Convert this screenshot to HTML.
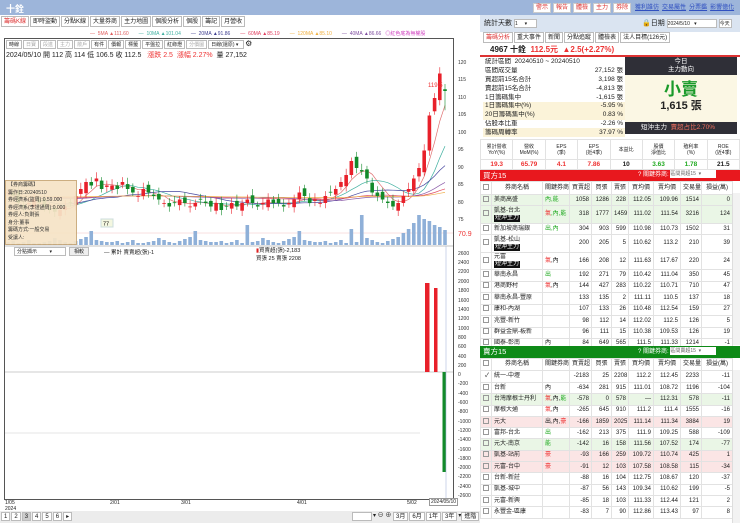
<!DOCTYPE html>
<html><head><meta charset="utf-8">
<style>
*{box-sizing:border-box;margin:0;padding:0}
body{width:740px;height:523px;overflow:hidden;background:#fff;font-family:"Liberation Sans","Noto Sans CJK TC",sans-serif;font-size:7px;color:#222;position:relative}
.abs{position:absolute}
.topbar{background:#9db5da;height:15px}
.tab{display:inline-block;border:1px solid #bbb;background:#fff;padding:0 2px;height:11px;line-height:10px;font-size:6px;margin-right:1px;vertical-align:top}
.btn{display:inline-block;background:#fff;color:#d33;border:1px solid #ccc;padding:0 2px;font-size:6px;height:10px;line-height:9px;margin-right:2px}
.lnk{color:#3050c0;text-decoration:underline;margin-right:3px;font-size:6px}
table{border-collapse:collapse;width:100%}
td{border:1px solid #e2e2e2;font-size:6px;line-height:7px;text-align:right;padding:0 2px;white-space:nowrap;overflow:hidden}
td.l{text-align:left}td.c{text-align:center}
.tag{background:#111;color:#fff;padding:0 1px;font-size:6px;display:inline-block;line-height:7px}
.cb{display:inline-block;width:6px;height:6px;border:1px solid #999}
.g{background:#eaf6e6}.p{background:#fbe5e5}
.rd{color:#e33}.gr{color:#2a2}
.st td{border:none;font-size:6.5px;line-height:8px;height:8.8px}
.mt td{font-size:5px;line-height:6px}
</style></head><body>
<!-- LEFT -->
<div class="abs topbar" style="left:0;top:0;width:480px"><span style="color:#fff;font-weight:bold;font-size:9px;position:absolute;left:6px;top:2px">十銓</span></div>
<div class="abs" style="left:1px;top:16px;white-space:nowrap">
<span class="tab" style="color:#d33">籌碼K線</span><span class="tab">即時盜動</span><span class="tab">分點K線</span><span class="tab">大量券商</span><span class="tab">主力地圖</span><span class="tab">個股分析</span><span class="tab">個股</span><span class="tab">籌記</span><span class="tab">月營收</span></div>
<div class="abs" style="left:90px;top:30px;font-size:5px;white-space:nowrap">
<span style="color:#e06060;margin-right:10px">— &nbsp;5MA ▲111.60</span><span style="color:#40b0a0;margin-right:10px">— &nbsp;10MA ▲101.04</span><span style="color:#404090;margin-right:10px">— &nbsp;20MA ▲91.86</span><span style="color:#e04060;margin-right:10px">— &nbsp;60MA ▲85.19</span><span style="color:#f0b040;margin-right:10px">— &nbsp;120MA ▲85.10</span><span style="color:#8050a0;margin-right:4px">— &nbsp;40MA ▲86.66</span><span style="color:#d040c0">◎紅色底為無權股</span></div>
<div class="abs" style="left:4px;top:38px;width:450px;height:462px;border:1px solid #555"></div>
<div class="abs" style="left:6px;top:40px;white-space:nowrap">
<span class="tab" style="height:9px;line-height:8px;font-size:5px">時線</span><span class="tab" style="height:9px;line-height:8px;font-size:5px;color:#aaa">日寶</span><span class="tab" style="height:9px;line-height:8px;font-size:5px;color:#aaa">段進</span><span class="tab" style="height:9px;line-height:8px;font-size:5px;color:#aaa">主力</span><span class="tab" style="height:9px;line-height:8px;font-size:5px;color:#aaa">散戶</span><span class="tab" style="height:9px;line-height:8px;font-size:5px">有件</span><span class="tab" style="height:9px;line-height:8px;font-size:5px">價報</span><span class="tab" style="height:9px;line-height:8px;font-size:5px">標籤</span><span class="tab" style="height:9px;line-height:8px;font-size:5px">平盤拉</span><span class="tab" style="height:9px;line-height:8px;font-size:5px">紅綠燈</span><span class="tab" style="height:9px;line-height:8px;font-size:5px;color:#aaa">分價圖</span><span class="tab" style="height:9px;line-height:8px;font-size:5px;width:36px">日線(還原) ▾</span><span style="font-size:8px;line-height:8px">⚙</span></div>
<div class="abs" style="left:6px;top:50px;font-size:7px;white-space:nowrap">2024/05/10 開 112 高 114 低 106.5 收 112.5 &nbsp; <span class="rd">漲跌 2.5 &nbsp;漲幅 2.27%</span> &nbsp;量 27,152</div>
<svg class="abs" style="left:0;top:0" width="480" height="523" id="ch"></svg>
<div class="abs" style="left:458px;top:0;font-size:5px;color:#333;width:22px;height:500px">
<div class="abs" style="top:60px">120</div><div class="abs" style="top:77px">115</div><div class="abs" style="top:95px">110</div><div class="abs" style="top:112px">105</div><div class="abs" style="top:130px">100</div><div class="abs" style="top:147px">95</div><div class="abs" style="top:165px">90</div><div class="abs" style="top:182px">85</div><div class="abs" style="top:200px">80</div><div class="abs" style="top:217px">75</div><div class="abs rd" style="top:231px;font-size:7px">70.9</div>
<div class="abs" style="top:251px">2600</div><div class="abs" style="top:260px">2400</div><div class="abs" style="top:269px">2200</div><div class="abs" style="top:279px">2000</div><div class="abs" style="top:288px">1800</div><div class="abs" style="top:298px">1600</div><div class="abs" style="top:307px">1400</div><div class="abs" style="top:316px">1200</div><div class="abs" style="top:326px">1000</div><div class="abs" style="top:335px">800</div><div class="abs" style="top:344px">600</div><div class="abs" style="top:354px">400</div><div class="abs" style="top:363px">200</div><div class="abs" style="top:372px">0</div><div class="abs" style="top:381px">-200</div><div class="abs" style="top:391px">-400</div><div class="abs" style="top:400px">-600</div><div class="abs" style="top:409px">-800</div><div class="abs" style="top:419px">-1000</div><div class="abs" style="top:428px">-1200</div><div class="abs" style="top:437px">-1400</div><div class="abs" style="top:447px">-1600</div><div class="abs" style="top:456px">-1800</div><div class="abs" style="top:465px">-2000</div><div class="abs" style="top:474px">-2200</div><div class="abs" style="top:484px">-2400</div><div class="abs" style="top:493px">-2600</div></div>
<div class="abs" style="left:5px;top:180px;width:72px;height:65px;background:#f6e4c6;border:1px solid #c9a878;font-size:5px;line-height:7.5px;padding:1px 2px;opacity:.93;overflow:hidden;white-space:nowrap">【券商籌碼】<br>籌作日:20240510<br>券經濟系(盜周):0.59.000<br>券經濟系(李證通周):0.000<br>券經人:負剩張<br>身分:董事<br>籌碼方式:一般交易<br>受讓人:</div>
<div class="abs" style="left:14px;top:247px;width:52px;height:9px;border:1px solid #bbb;font-size:5px;line-height:8px;padding-left:2px">分點擷示 &nbsp; &nbsp; &nbsp; &nbsp; ▾</div>
<div class="abs" style="left:69px;top:247px;width:20px;height:9px;border:1px solid #bbb;background:#eee;font-size:5px;line-height:8px;text-align:center">相較</div>
<div class="abs" style="left:104px;top:248px;font-size:5.5px">— 累計 賣賣超(張)-1</div>
<div class="abs" style="left:256px;top:247px;font-size:5.5px;line-height:8px"><span style="color:#d22">▮</span>買賣超(張)-2,183<br>買張 25 賣張 2208</div>
<div class="abs" style="left:5px;top:500px;font-size:5px;line-height:6px">1/05<br>2024</div>
<div class="abs" style="left:110px;top:500px;font-size:5px">2/01</div>
<div class="abs" style="left:181px;top:500px;font-size:5px">3/01</div>
<div class="abs" style="left:297px;top:500px;font-size:5px">4/01</div>
<div class="abs" style="left:407px;top:500px;font-size:5px">5/02</div>
<div class="abs" style="left:429px;top:498px;font-size:5px;border:1px solid #999;padding:0 1px;background:#fff">2024/05/10</div>
<div class="abs" style="left:0;top:511px;width:480px;height:12px;background:#ececec"></div>
<div class="abs" style="left:1px;top:512px;white-space:nowrap"><span class="tab" style="height:9px;line-height:8px">1</span><span class="tab" style="height:9px;line-height:8px">2</span><span class="tab" style="height:9px;line-height:8px;background:#ccc">3</span><span class="tab" style="height:9px;line-height:8px">4</span><span class="tab" style="height:9px;line-height:8px">5</span><span class="tab" style="height:9px;line-height:8px">6</span><span class="tab" style="height:9px;line-height:8px">▸</span></div>
<div class="abs" style="left:352px;top:512px;font-size:6px;white-space:nowrap;line-height:9px"><span class="tab" style="height:9px;width:20px"></span>▾ ⊖ ⊕ <span class="tab" style="height:9px;line-height:8px">3月</span><span class="tab" style="height:9px;line-height:8px">6月</span><span class="tab" style="height:9px;line-height:8px">1年</span><span class="tab" style="height:9px;line-height:8px">3年</span>▾<span class="tab" style="height:9px;line-height:8px">進階</span></div>

<!-- RIGHT -->
<div class="abs topbar" style="left:480px;top:0;width:260px;white-space:nowrap;padding:2px 0 0 53px"><span class="btn">警示</span><span class="btn">報告</span><span class="btn">體檢</span><span class="btn">主力</span><span class="btn">券除</span> <span class="lnk">獲利誰仿</span><span class="lnk">交易屬性</span><span class="lnk">分票鑑</span><span class="lnk">影響億化</span></div>
<div class="abs" style="left:480px;top:15px;width:260px;height:17px;background:#dae4f1;font-size:7px;padding:4px 4px;white-space:nowrap;line-height:9px">統計天數 <span style="display:inline-block;width:23px;height:9px;background:#fff;border:1px solid #bbb;font-size:5px;vertical-align:top;line-height:8px">1 &nbsp; &nbsp; ▾</span><span style="position:absolute;left:162px;top:4px">🔒日期 <span style="display:inline-block;width:50px;height:9px;background:#fff;border:1px solid #bbb;font-size:5px;vertical-align:top;line-height:8px">2024/5/10 &nbsp; ▾</span> <span style="display:inline-block;width:13px;height:9px;background:#fff;border:1px solid #bbb;font-size:5px;vertical-align:top;line-height:8px">今天</span></span></div>
<div class="abs" style="left:483px;top:32px;white-space:nowrap"><span class="tab" style="color:#d33">籌碼分析</span><span class="tab">重大事件</span><span class="tab">新聞</span><span class="tab">分點追蹤</span><span class="tab">體檢表</span><span class="tab">法人目標(126元)</span></div>
<div class="abs" style="left:480px;top:44px;width:260px;height:13px;border-bottom:2px solid #d33;font-size:8px;font-weight:bold;padding:1px 10px;white-space:nowrap;line-height:10px">4967 十銓 &nbsp;<span class="rd">112.5元 &nbsp;▲2.5(+2.27%)</span></div>
<div class="abs" style="left:483px;top:58px;width:142px"><table class="st">
<tr><td class="l">統計區間 &nbsp;20240510 ~ 20240510</td><td></td></tr>
<tr><td class="l">區間成交量</td><td>27,152 張</td></tr>
<tr><td class="l">買超前15名合計</td><td>3,198 張</td></tr>
<tr><td class="l">賣超前15名合計</td><td>-4,813 張</td></tr>
<tr><td class="l">1日籌碼集中</td><td>-1,615 張</td></tr>
<tr style="background:#fbf3d9"><td class="l">1日籌碼集中(%)</td><td>-5.95 %</td></tr>
<tr style="background:#fbf3d9"><td class="l">20日籌碼集中(%)</td><td>0.83 %</td></tr>
<tr><td class="l">佔股本比重</td><td>-2.26 %</td></tr>
<tr style="background:#fbf3d9"><td class="l">籌碼周轉率</td><td>37.97 %</td></tr></table></div>
<div class="abs" style="left:625px;top:57px;width:112px;height:18px;background:#2f2f37;color:#fff;text-align:center;font-size:6.5px;line-height:8px;padding-top:1px">今日<br>主力動向</div>
<div class="abs" style="left:625px;top:75px;width:112px;height:47px;background:#fbf7e4;text-align:center"><div style="color:#1a9a2a;font-size:17px;line-height:20px;font-weight:bold;margin-top:5px">小賣</div><div style="font-size:11px;line-height:13px;font-weight:bold">1,615 張</div></div>
<div class="abs" style="left:625px;top:122px;width:112px;height:12px;background:#2f2f37;color:#fff;font-size:6.5px;line-height:8px;padding:2px 0 0 16px;white-space:nowrap">短沖主力 &nbsp;<span style="color:#f07060">賣超占比2.70%</span></div>
<div class="abs" style="left:480px;top:139px;width:260px"><table class="mt" style="table-layout:fixed"><tr style="height:20px"><td class="c">累計營收<br>YoY(%)</td><td class="c">營收<br>MoM(%)</td><td class="c">EPS<br>(季)</td><td class="c">EPS<br>(近4季)</td><td class="c">本益比</td><td class="c">股價<br>淨值比</td><td class="c">殖利率<br>(%)</td><td class="c">ROE<br>(近4季)</td></tr>
<tr style="height:10px;font-weight:bold"><td class="c rd" style="font-size:6.5px">19.3</td><td class="c rd" style="font-size:6.5px">65.79</td><td class="c rd" style="font-size:6.5px">4.1</td><td class="c rd" style="font-size:6.5px">7.86</td><td class="c" style="font-size:6.5px">10</td><td class="c gr" style="font-size:6.5px">3.63</td><td class="c gr" style="font-size:6.5px">1.78</td><td class="c" style="font-size:6.5px">21.5</td></tr></table></div>
<div class="abs" style="left:480px;top:170px;width:260px;height:11px;background:#e8181e;color:#fff;font-size:7.5px;line-height:11px;padding-left:3px;white-space:nowrap">買方15<span style="position:absolute;left:158px;top:0;font-size:6px">? 關鍵券商: <span style="display:inline-block;width:46px;height:8px;background:#fff;color:#666;font-size:5px;line-height:8px;vertical-align:middle">區間買超15 &nbsp;▾</span></span></div>
<div class="abs" style="left:480px;top:181px;width:252px"><table style="table-layout:fixed">
<colgroup><col style="width:11px"><col style="width:51px"><col style="width:27px"><col style="width:22px"><col style="width:20px"><col style="width:17px"><col style="width:25px"><col style="width:27px"><col style="width:21px"><col style="width:31px"></colgroup>
<tr style="height:13px"><td class="c"><span class="cb"></span></td><td class="c">券商名稱</td><td class="c">關鍵券商</td><td class="c">買賣超</td><td class="c">買張</td><td class="c">賣張</td><td class="c">買均價</td><td class="c">賣均價</td><td class="c">交易量</td><td class="c">損益(萬)</td></tr>
<tr class="g" style="height:11px"><td><span class="cb"></span></td><td class="l">美商高盛</td><td class="l gr">內,能</td><td>1058</td><td>1286</td><td>228</td><td>112.05</td><td>109.96</td><td>1514</td><td>0</td></tr>
<tr class="g" style="height:18px"><td><span class="cb"></span></td><td class="l">凱基-台北<br><span class="tag">短沖主力</span></td><td class="l"><span class="rd">氣</span><span class="gr">,內,能</span></td><td>318</td><td>1777</td><td>1459</td><td>111.02</td><td>111.54</td><td>3216</td><td>124</td></tr>
<tr style="height:11px"><td><span class="cb"></span></td><td class="l">新加坡商瑞銀</td><td class="l gr">出,內</td><td>304</td><td>903</td><td>599</td><td>110.98</td><td>110.73</td><td>1502</td><td>31</td></tr>
<tr style="height:18px"><td><span class="cb"></span></td><td class="l">凱基-松山<br><span class="tag">短沖主力</span></td><td></td><td>200</td><td>205</td><td>5</td><td>110.62</td><td>113.2</td><td>210</td><td>39</td></tr>
<tr style="height:17px"><td><span class="cb"></span></td><td class="l">元富<br><span class="tag">短沖主力</span></td><td class="l"><span class="rd">氣</span>,內</td><td>166</td><td>208</td><td>12</td><td>111.63</td><td>117.67</td><td>220</td><td>24</td></tr>
<tr style="height:11.5px"><td><span class="cb"></span></td><td class="l">華南永昌</td><td class="l gr">出</td><td>192</td><td>271</td><td>79</td><td>110.42</td><td>111.04</td><td>350</td><td>45</td></tr>
<tr style="height:11.5px"><td><span class="cb"></span></td><td class="l">港商野村</td><td class="l"><span class="rd">氣</span>,內</td><td>144</td><td>427</td><td>283</td><td>110.22</td><td>110.71</td><td>710</td><td>47</td></tr>
<tr style="height:11.5px"><td><span class="cb"></span></td><td class="l">華南永昌-豐原</td><td></td><td>133</td><td>135</td><td>2</td><td>111.11</td><td>110.5</td><td>137</td><td>18</td></tr>
<tr style="height:11.5px"><td><span class="cb"></span></td><td class="l">康和-內湖</td><td></td><td>107</td><td>133</td><td>26</td><td>110.48</td><td>112.54</td><td>159</td><td>27</td></tr>
<tr style="height:11.5px"><td><span class="cb"></span></td><td class="l">兆豐-新竹</td><td></td><td>98</td><td>112</td><td>14</td><td>112.02</td><td>112.5</td><td>126</td><td>5</td></tr>
<tr style="height:11.5px"><td><span class="cb"></span></td><td class="l">群益金鼎-板新</td><td></td><td>96</td><td>111</td><td>15</td><td>110.38</td><td>109.53</td><td>126</td><td>19</td></tr>
<tr style="height:9px"><td><span class="cb"></span></td><td class="l">國泰-彰南</td><td class="l">內</td><td>84</td><td>649</td><td>565</td><td>111.5</td><td>111.33</td><td>1214</td><td>-1</td></tr></table></div>
<div class="abs" style="left:480px;top:346px;width:260px;height:12px;background:#0e8a17;color:#fff;font-size:7.5px;line-height:12px;padding-left:3px;white-space:nowrap">賣方15<span style="position:absolute;left:158px;top:0;font-size:6px">? 關鍵券商: <span style="display:inline-block;width:46px;height:8px;background:#fff;color:#666;font-size:5px;line-height:8px;vertical-align:middle">區間賣超15 &nbsp;▾</span></span></div>
<div class="abs" style="left:480px;top:358px;width:252px"><table style="table-layout:fixed">
<colgroup><col style="width:11px"><col style="width:51px"><col style="width:27px"><col style="width:22px"><col style="width:20px"><col style="width:17px"><col style="width:25px"><col style="width:27px"><col style="width:21px"><col style="width:31px"></colgroup>
<tr style="height:12px"><td class="c"><span class="cb"></span></td><td class="c">券商名稱</td><td class="c">關鍵券商</td><td class="c">買賣超</td><td class="c">買張</td><td class="c">賣張</td><td class="c">買均價</td><td class="c">賣均價</td><td class="c">交易量</td><td class="c">損益(萬)</td></tr>
<tr style="height:12px"><td>✓</td><td class="l">統一-中壢</td><td></td><td>-2183</td><td>25</td><td>2208</td><td>112.2</td><td>112.45</td><td>2233</td><td>-11</td></tr>
<tr style="height:11.3px"><td><span class="cb"></span></td><td class="l">台新</td><td class="l">內</td><td>-634</td><td>281</td><td>915</td><td>111.01</td><td>108.72</td><td>1196</td><td>-104</td></tr>
<tr class="g" style="height:11.3px"><td><span class="cb"></span></td><td class="l">台灣摩根士丹利</td><td class="l"><span class="rd">氣</span>,內,<span class="gr">能</span></td><td>-578</td><td>0</td><td>578</td><td>—</td><td>112.31</td><td>578</td><td>-11</td></tr>
<tr style="height:11.3px"><td><span class="cb"></span></td><td class="l">摩根大通</td><td class="l"><span class="rd">氣</span>,內</td><td>-265</td><td>645</td><td>910</td><td>111.2</td><td>111.4</td><td>1555</td><td>-16</td></tr>
<tr class="p" style="height:11.3px"><td><span class="cb"></span></td><td class="l">元大</td><td class="l">出,內,<span class="rd">豪</span></td><td>-166</td><td>1859</td><td>2025</td><td>111.14</td><td>111.34</td><td>3884</td><td>19</td></tr>
<tr style="height:11.3px"><td><span class="cb"></span></td><td class="l">富邦-台北</td><td class="l gr">出</td><td>-162</td><td>213</td><td>375</td><td>111.9</td><td>109.25</td><td>588</td><td>-109</td></tr>
<tr class="g" style="height:11.3px"><td><span class="cb"></span></td><td class="l">元大-南京</td><td class="l gr">能</td><td>-142</td><td>16</td><td>158</td><td>111.56</td><td>107.52</td><td>174</td><td>-77</td></tr>
<tr class="p" style="height:11.3px"><td><span class="cb"></span></td><td class="l">凱基-站前</td><td class="l rd">豪</td><td>-93</td><td>166</td><td>259</td><td>109.72</td><td>110.74</td><td>425</td><td>1</td></tr>
<tr class="p" style="height:11.3px"><td><span class="cb"></span></td><td class="l">元富-台中</td><td class="l rd">豪</td><td>-91</td><td>12</td><td>103</td><td>107.58</td><td>108.58</td><td>115</td><td>-34</td></tr>
<tr style="height:11.3px"><td><span class="cb"></span></td><td class="l">台新-新莊</td><td></td><td>-88</td><td>16</td><td>104</td><td>112.75</td><td>108.67</td><td>120</td><td>-37</td></tr>
<tr style="height:11.3px"><td><span class="cb"></span></td><td class="l">凱基-城中</td><td></td><td>-87</td><td>56</td><td>143</td><td>109.34</td><td>110.62</td><td>199</td><td>-5</td></tr>
<tr style="height:11.3px"><td><span class="cb"></span></td><td class="l">元富-新興</td><td></td><td>-85</td><td>18</td><td>103</td><td>111.33</td><td>112.44</td><td>121</td><td>2</td></tr>
<tr style="height:11.3px"><td><span class="cb"></span></td><td class="l">永豐金-區康</td><td></td><td>-83</td><td>7</td><td>90</td><td>112.86</td><td>113.43</td><td>97</td><td>8</td></tr></table></div>
<div class="abs" style="left:732px;top:193px;width:8px;height:152px;background:#f2f2f2;border-left:1px solid #ddd"></div>
<div class="abs" style="left:732px;top:370px;width:8px;height:153px;background:#f2f2f2;border-left:1px solid #ddd"></div>
<script>
var c=[83,82,80,79,80,81,80,79,78,77.5,78,79,80,82,84,86,85,87,84,85,85,84,86,84,83,82,84,83,82,81,80,79,80,81,80,79,80,81,80,79,80,78,79,80,79,80,81,80,79,80,81,80,80,79,80,81,83,82,80,81,80,82,83,84,86,88,92,90,89,87,83,82,81,80,79,80,82,84,87,90,95,105,110,117,112.5];
var n=c.length,x0=8,st=(445-x0)/(n-1),s='';
function Y(p){return 63+(120-p)*3.5}
s+='<line x1="5" y1="246" x2="453" y2="246" stroke="#888" stroke-width="0.6"/>';
s+='<line x1="5" y1="372" x2="453" y2="372" stroke="#999" stroke-width="0.5"/>';
s+='<line x1="5" y1="233" x2="453" y2="233" stroke="#f2c0c0" stroke-width="0.5"/>';
for(var i=0;i<n;i++){var x=x0+i*st,v=[3,4,2,3,5,2,2,3,4,7,5,3,2,4,6,8,14,5,4,3][i%20];if(i>75)v=[12,16,22,30,26,24,20,18,15][i-76];if(i==46)v=20;if(i==66)v=16;if(i==68)v=30;
s+='<rect x="'+(x-1.8)+'" y="'+(245-v)+'" width="3.6" height="'+v+'" fill="#8fb0d8"/>';}
var cols=[[5,'#e07070'],[10,'#40b0a0'],[20,'#4848a0'],[60,'#e04a60'],[40,'#8a5aa8'],[120,'#f0b050']];
cols.forEach(function(q){var pts=[];for(var i=0;i<n;i++){var sm=0,cnt=0;for(var j=i;j>i-q[0]&&j>=0;j--){sm+=c[j];cnt++}var base=q[0]>20?82:0;var m=q[0]>20?(sm+base*(q[0]-cnt))/q[0]:sm/cnt;pts.push((x0+i*st).toFixed(1)+','+Y(m).toFixed(1))}s+='<polyline points="'+pts.join(' ')+'" fill="none" stroke="'+q[1]+'" stroke-width="0.7"/>'});
for(var i=0;i<n;i++){var x=x0+i*st,cl=c[i],op=i?c[i-1]+((i*7)%5-2)*0.6:83,up=cl>=op,h=Math.max(cl,op)+1+(i%3)*0.4,l=Math.min(cl,op)-1-(i%2)*0.5;if(i==n-1){op=112;h=114;l=106.5}
var col=up?'#e8202a':'#138a2a';s+='<line x1="'+x+'" y1="'+Y(h)+'" x2="'+x+'" y2="'+Y(l)+'" stroke="'+col+'" stroke-width="0.6"/>';var t=Y(Math.max(cl,op)),b=Y(Math.min(cl,op));s+='<rect x="'+(x-1.8)+'" y="'+t+'" width="3.6" height="'+Math.max(b-t,0.8)+'" fill="'+col+'"/>';}
s+='<text x="428" y="87" font-size="6" fill="#e33" font-family="Liberation Sans">119.5</text>';
s+='<rect x="101" y="219" width="12" height="8" fill="#f4f7e0" stroke="#cdd"/><text x="103" y="225.5" font-size="5.5" font-family="Liberation Sans">77</text>';
s+='<path d="M5 433 L420 433" stroke="#ccc" stroke-width="0.6"/>';
s+='<rect x="425" y="283" width="4.5" height="89" fill="#e8202a"/><rect x="434" y="288" width="3.5" height="84" fill="#e8202a"/><rect x="442.5" y="372" width="3.5" height="100" fill="#138a2a"/>';
s+='<line x1="446" y1="246" x2="446" y2="500" stroke="#aabbdd" stroke-width="0.6"/>';
document.getElementById('ch').innerHTML=s;
</script>
</body></html>
